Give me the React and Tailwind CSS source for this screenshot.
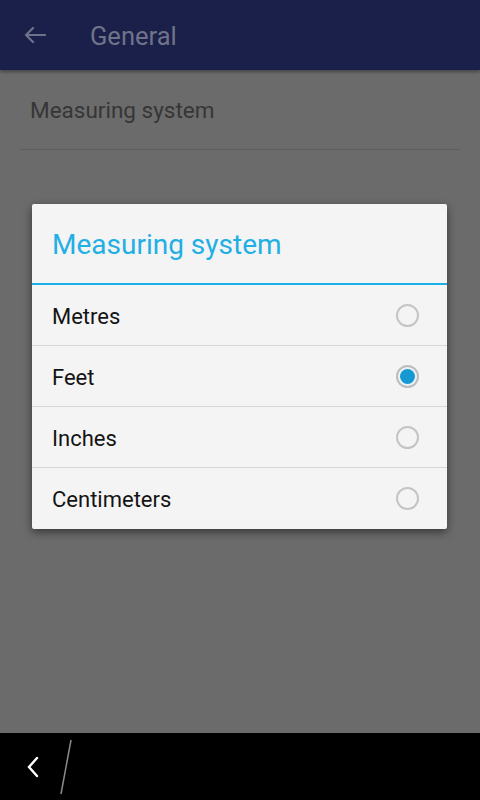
import React, { useState } from 'react';

const options = ['Metres', 'Feet', 'Inches', 'Centimeters'];

export default function App() {
  const [selected, setSelected] = useState('Feet');

  return (
    <div className="relative w-[480px] h-[800px] flex flex-col bg-[#6b6b6b] overflow-hidden" style={{ fontFamily: 'Roboto, "Noto Sans", sans-serif' }}>
      {/* Header */}
      <div className="h-[70px] bg-[#1b204a] flex items-center shadow-[0_2px_3px_rgba(0,0,0,0.35)] z-10">
        <svg className="ml-[24px]" width="22" height="18" viewBox="0 0 22 18" fill="none" stroke="#6f7389" strokeWidth="2.2" strokeLinecap="round" strokeLinejoin="round">
          <path d="M21 9H2M9 2L2 9l7 7" />
        </svg>
        <span className="ml-[44px] mt-[2px] text-[25.5px] text-[#6f7389]">General</span>
      </div>

      {/* Settings list */}
      <div className="flex-1 px-[20px]">
        <div className="h-[80px] flex items-center pt-[3px] pl-[10px] border-b border-[#5e5e5e] text-[22.5px] text-[#363636]">
          Measuring system
        </div>
      </div>

      {/* Nav bar */}
      <div className="h-[67px] bg-black flex items-center">
        <svg className="ml-[26px]" width="14" height="22" viewBox="0 0 14 22" fill="none" stroke="#ffffff" strokeWidth="2.4" strokeLinecap="round">
          <path d="M11 2L3 11l8 9" />
        </svg>
        <svg className="ml-[20px]" width="12" height="58" viewBox="0 0 12 58">
          <line x1="11" y1="2" x2="1" y2="56" stroke="#8a8a8a" strokeWidth="1.5" />
        </svg>
      </div>

      {/* Dialog */}
      <div className="absolute left-[32px] top-[204px] w-[415px] bg-[#f4f4f4] rounded-[2px] shadow-[0_3px_8px_rgba(0,0,0,0.5)]">
        <div className="h-[81px] flex items-center pt-[3px] pl-[20px] text-[28px] text-[#22afe4] border-b-2 border-[#1ab0e8]">
          Measuring system
        </div>
        {options.map((opt, i) => (
          <button
            key={opt}
            onClick={() => setSelected(opt)}
            className={`w-full h-[61px] flex items-center justify-between pl-[20px] pr-[28px] text-left text-[22px] text-[#141414] ${i < options.length - 1 ? 'border-b border-[#d6d6d6]' : ''}`}
          >
            <span className="mt-[2px]">{opt}</span>
            {selected === opt ? (
              <span className="w-[23px] h-[23px] rounded-full border-2 border-[#bdbdbd] flex items-center justify-center bg-[#e8f4fa]">
                <span className="w-[15px] h-[15px] rounded-full bg-[#1699d3]" />
              </span>
            ) : (
              <span className="w-[23px] h-[23px] rounded-full border-2 border-[#c4c4c4]" />
            )}
          </button>
        ))}
      </div>
    </div>
  );
}
